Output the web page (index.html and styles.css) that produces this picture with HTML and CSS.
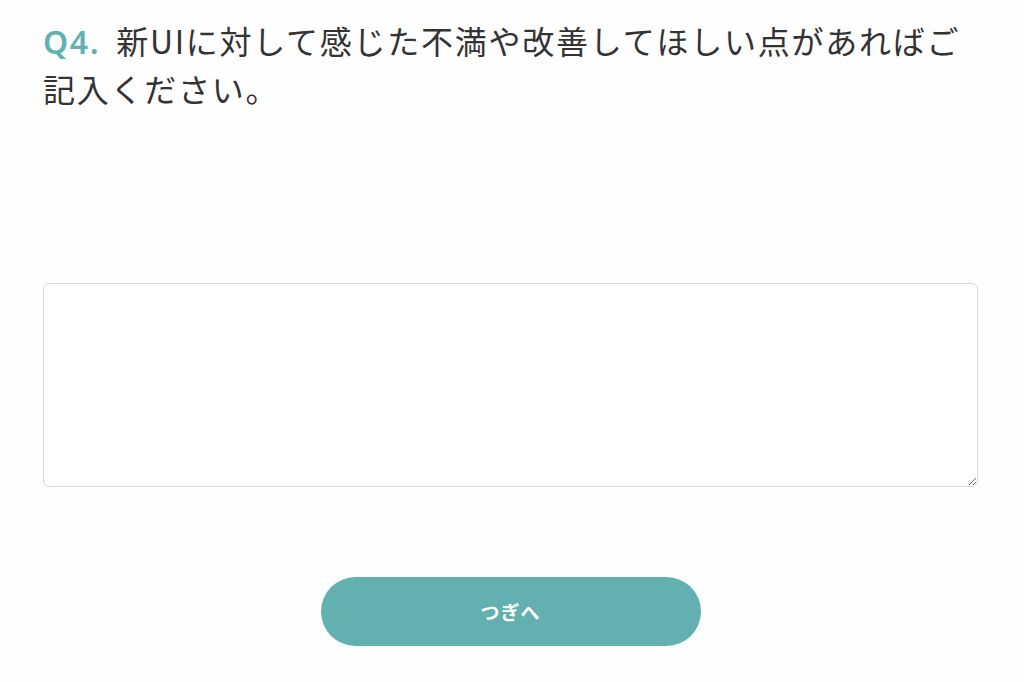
FILE: index.html
```html
<!DOCTYPE html>
<html lang="ja">
<head>
    <meta charset="UTF-8">
    <meta name="viewport" content="width=device-width, initial-scale=1.0">
    <title>アンケート Q4</title>
    <link rel="stylesheet" href="styles.css">
</head>
<body>
    <form class="question">
        <h2 class="question-title"><span class="question-num">Q4.</span>新UIに対して感じた不満や改善してほしい点があればご記入ください。</h2>
        <textarea class="answer-box" name="q4"></textarea>
        <div class="actions">
            <button type="button" class="next-button">つぎへ</button>
        </div>
    </form>
</body>
</html>
```

FILE: styles.css
```css
body { margin: 0; background: #fefefe; color: #333; font-family: "Noto Sans CJK JP", "Noto Sans", sans-serif; }
.question { width: 935px; padding: 17px 0 0 43px; }
.question-title { margin: 0; font-size: 32px; font-weight: normal; line-height: 46px; letter-spacing: 1.75px; color: #333; }
.question-num { display: inline-block; margin-right: 16px; color: #5fb2b1; font-weight: 600; font-family: "Noto Sans", sans-serif; letter-spacing: 1.6px; }
.answer-box {
    display: block;
    box-sizing: border-box;
    width: 100%;
    height: 204px;
    margin-top: 172px;
    border: 1.5px solid #d8d8d8;
    border-radius: 6px;
    background: #fff;
    resize: vertical;
}
.actions { display: flex; justify-content: center; margin-top: 90px; }
.next-button {
    width: 380px;
    height: 69px;
    border: none;
    border-radius: 35px;
    background: #62b0b0;
    color: white;
    font-family: inherit;
    font-size: 19px;
    font-weight: bold;
    letter-spacing: 1px;
    cursor: pointer;
}
```
